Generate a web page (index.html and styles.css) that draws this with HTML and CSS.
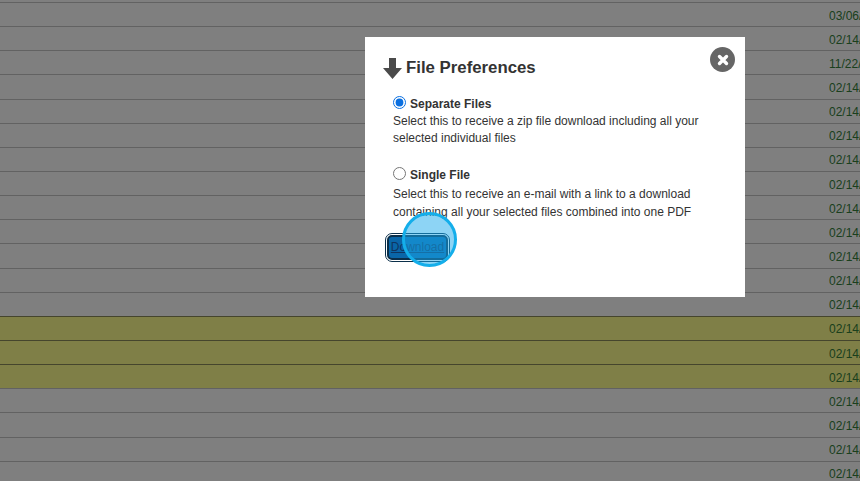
FILE: index.html
```html
<!DOCTYPE html>
<html lang="en">
  <head>
    <meta charset="UTF-8" />
    <title>File Preferences</title>
    <link rel="stylesheet" href="styles.css">
  </head>
  <body>
    <div class="rows">
      <div class="row"><span>03/06/2019</span></div>
      <div class="row"><span>02/14/2019</span></div>
      <div class="row"><span>11/22/2018</span></div>
      <div class="row"><span>02/14/2019</span></div>
      <div class="row"><span>02/14/2019</span></div>
      <div class="row"><span>02/14/2019</span></div>
      <div class="row"><span>02/14/2019</span></div>
      <div class="row"><span>02/14/2019</span></div>
      <div class="row"><span>02/14/2019</span></div>
      <div class="row"><span>02/14/2019</span></div>
      <div class="row"><span>02/14/2019</span></div>
      <div class="row"><span>02/14/2019</span></div>
      <div class="row"><span>02/14/2019</span></div>
      <div class="row marked"><span>02/14/2019</span></div>
      <div class="row marked"><span>02/14/2019</span></div>
      <div class="row marked"><span>02/14/2019</span></div>
      <div class="row"><span>02/14/2019</span></div>
      <div class="row"><span>02/14/2019</span></div>
      <div class="row"><span>02/14/2019</span></div>
      <div class="row"><span>02/14/2019</span></div>
    </div>

    <div class="overlay"></div>

    <div class="modal">
      <h2 class="modal-title">
        <svg class="title-icon" width="19" height="21" viewBox="0 0 19 21">
          <path d="M6 0h7v10h6l-9.500 11L0 10h6z" fill="#4a4a4a" />
        </svg>
        File Preferences
      </h2>

      <div class="option">
        <label class="option-label"><input type="radio" name="pref" checked /> Separate Files</label>
        <p>Select this to receive a zip file download including all your<br />selected individual files</p>
      </div>

      <div class="option option-single">
        <label class="option-label"><input type="radio" name="pref" /> Single File</label>
        <p>Select this to receive an e-mail with a link to a download<br />containing all your selected files combined into one PDF</p>
      </div>

      <button class="download">Download</button>

      <div class="close">
        <svg width="12" height="12" viewBox="0 0 12 12">
          <path d="M2.500 2.500l7 7M9.500 2.500l-7 7" stroke="#fff" stroke-width="3.400" stroke-linecap="round" />
        </svg>
      </div>
    </div>

    <div class="spotlight"></div>
  </body>
</html>
```

FILE: styles.css
```css
html,
body {
  height: 100%;
  overflow: hidden;
}

body {
  margin: 0;
  font-family: "Liberation Sans", Arial, sans-serif;
  background-color: #fff;
}

.rows {
  width: 890px;
  padding-top: 2px;
}

.row {
  display: flex;
  align-items: center;
  justify-content: flex-end;
  box-sizing: border-box;
  height: 24.150px;
  padding-top: 2px;
  border-top: 1px solid #c4c4c4;
  font-size: 12px;
  color: #34803a;
}

.row span {
  width: 61px;
}

.marked {
  background-color: #ffff8f;
  border-top-color: #8a8a5a;
}

.overlay {
  position: fixed;
  inset: 0;
  background-color: rgba(0, 0, 0, 0.5);
}

.modal {
  position: fixed;
  left: 365px;
  top: 37px;
  width: 380px;
  height: 260px;
  box-sizing: border-box;
  padding: 19px 18px 0 18px;
  background-color: #fff;
  color: #333;
}

.modal-title {
  display: flex;
  align-items: center;
  gap: 4px;
  margin: 0 0 17px 0;
  font-size: 16.800px;
  line-height: 22px;
  font-weight: bold;
}

.title-icon {
  margin-top: 2px;
}

.option {
  padding-left: 10px;
  margin-bottom: 20px;
  font-size: 12px;
  line-height: 17px;
}

.option-single {
  margin-bottom: 14px;
  line-height: 18px;
}

.option-single .option-label {
  line-height: 17px;
  margin-bottom: 1px;
}

.option-label {
  display: flex;
  align-items: center;
  gap: 4px;
  font-weight: bold;
}

.option-label input {
  width: 13px;
  height: 13px;
  margin: -2px 0 3px 0;
  accent-color: #0a6fe0;
}

.option p {
  margin: 0;
}

.download {
  display: block;
  width: 61px;
  height: 25px;
  margin: 0 0 0 4px;
  padding: 0 0 2px 0;
  border: 2px solid #0b2f4a;
  border-radius: 5px;
  outline: 1px solid #0b2f4a;
  outline-offset: 1px;
  background-color: #0a66a8;
  color: #0f3560;
  font-family: inherit;
  font-size: 12px;
  text-decoration: underline;
}

.close {
  position: absolute;
  left: 345px;
  top: 10px;
  display: flex;
  align-items: center;
  justify-content: center;
  width: 25px;
  height: 25px;
  border-radius: 50%;
  background-color: #666;
}

.spotlight {
  position: fixed;
  left: 402px;
  top: 212px;
  box-sizing: border-box;
  width: 55px;
  height: 55px;
  border: 3px solid #14aeea;
  border-radius: 50%;
  background-color: rgba(28, 170, 235, 0.5);
}
```
